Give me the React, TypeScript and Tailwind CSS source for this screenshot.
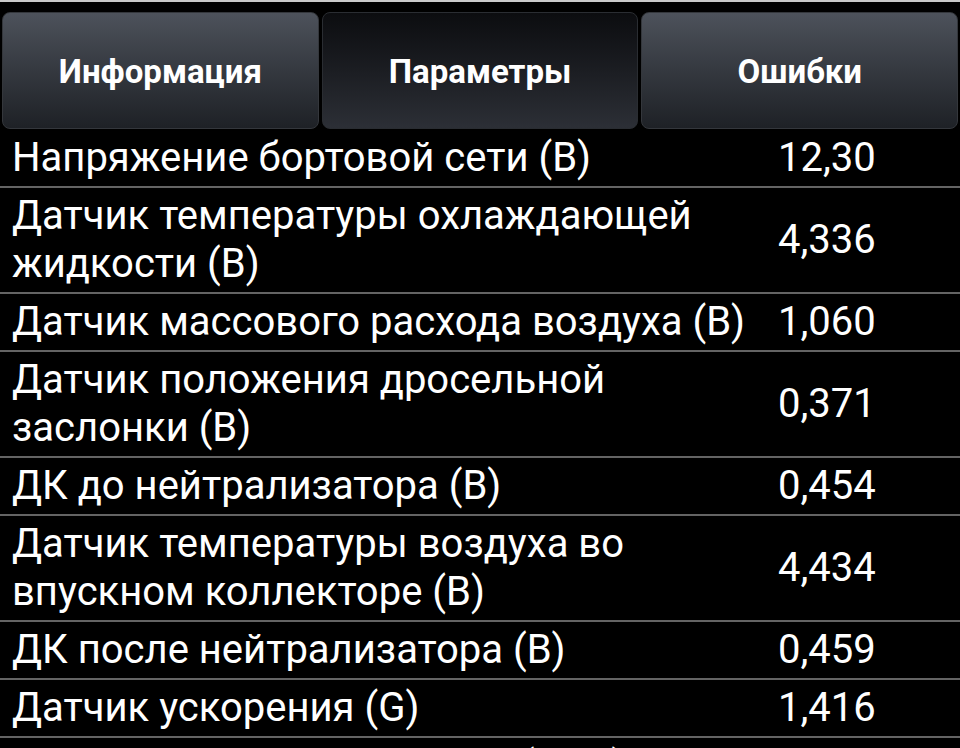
import React from "react";

const rows: { label: string; value: string }[] = [
  { label: "Напряжение бортовой сети (В)", value: "12,30" },
  { label: "Датчик температуры охлаждающей жидкости (В)", value: "4,336" },
  { label: "Датчик массового расхода воздуха (В)", value: "1,060" },
  { label: "Датчик положения дросельной заслонки (В)", value: "0,371" },
  { label: "ДК до нейтрализатора (В)", value: "0,454" },
  { label: "Датчик температуры воздуха во впускном коллекторе (В)", value: "4,434" },
  { label: "ДК после нейтрализатора (В)", value: "0,459" },
  { label: "Датчик ускорения (G)", value: "1,416" },
  { label: "Массовый расход воздуха (кг/ч)", value: "9,710" },
];

export default function App() {
  return (
    <div
      className="w-[960px] h-[748px] overflow-hidden bg-black text-white"
      style={{ fontFamily: "Roboto, 'Noto Sans', sans-serif" }}
    >
      <div className="h-[2px] bg-[#c9c9c9]" />
      <div className="flex gap-[3px] px-[2px] pt-[10px] pb-px">
        <div className="flex-1 h-[117px] rounded-[8px] border border-[#34373c] bg-gradient-to-b from-[#4d525b] to-[#1e2126] flex items-center justify-center pt-[3px] text-[33px] font-bold">
          Информация
        </div>
        <div className="flex-1 h-[117px] rounded-[8px] border border-[#2a2d32] bg-gradient-to-b from-[#0c0d10] to-[#2c2f36] flex items-center justify-center pt-[3px] text-[33px] font-bold">
          Параметры
        </div>
        <div className="flex-1 h-[117px] rounded-[8px] border border-[#34373c] bg-gradient-to-b from-[#4d525b] to-[#1e2126] flex items-center justify-center pt-[3px] text-[33px] font-bold">
          Ошибки
        </div>
      </div>
      <div className="flex flex-col">
        {rows.map((r, i) => (
          <div
            key={i}
            className="grid grid-cols-[764px_1fr] items-center border-b-2 border-[#646464] min-h-[57px] pt-[4px] pb-[4px]"
          >
            <div className="pl-[12px] pr-[4px] text-[40px] leading-[48px]">{r.label}</div>
            <div className="pl-[14px] text-[40px] leading-[48px]">{r.value}</div>
          </div>
        ))}
      </div>
    </div>
  );
}
